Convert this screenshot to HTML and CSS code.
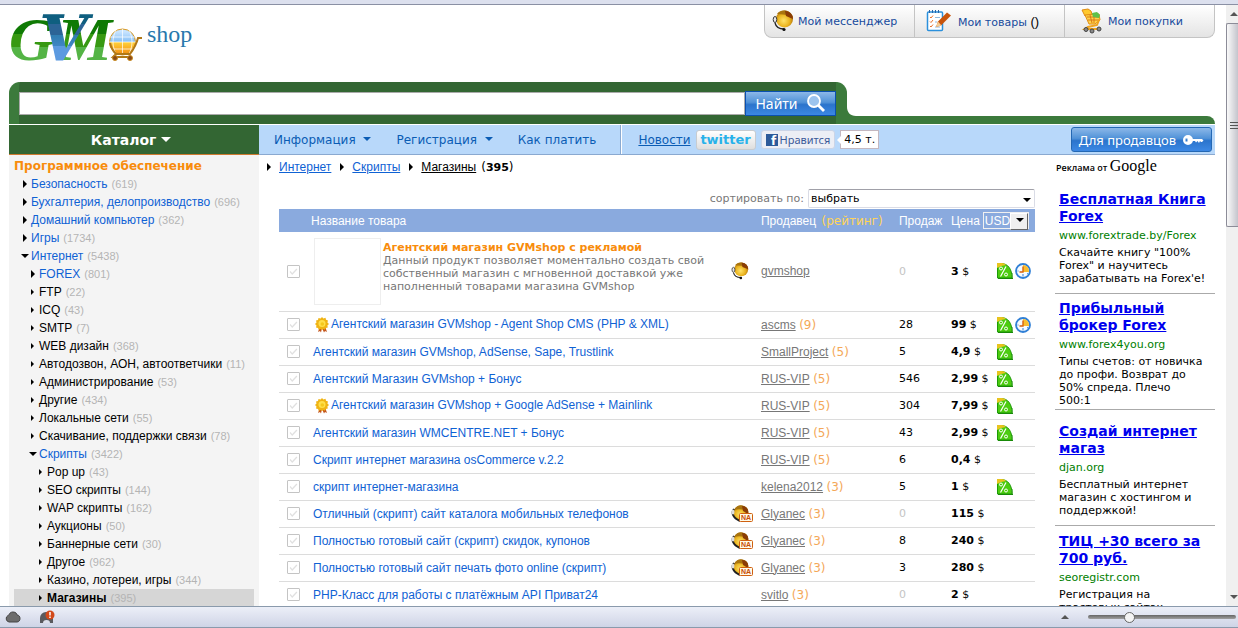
FILE: index.html
```html
<!DOCTYPE html>
<html lang="ru">
<head>
<meta charset="UTF-8">
<meta name="viewport" content="width=device-width, initial-scale=1.0">
<title>GVM shop - Магазины</title>
<link rel="stylesheet" href="styles.css">
</head>
<body>

<!-- Icons -->
<svg class="sprite" aria-hidden="true">
  <defs>
    <linearGradient id="gGreen" x1="0" y1="0" x2="0" y2="1">
      <stop offset="0.22" stop-color="#0f7a04"/><stop offset="0.42" stop-color="#0f7a04"/>
      <stop offset="0.42" stop-color="#379912"/><stop offset="0.62" stop-color="#379912"/>
      <stop offset="0.62" stop-color="#54b445"/>
    </linearGradient>
    <linearGradient id="gBlue" x1="0" y1="0" x2="0" y2="1">
      <stop offset="0.3" stop-color="#0f5f80"/><stop offset="0.3" stop-color="#2c6496"/>
      <stop offset="0.44" stop-color="#2c6496"/><stop offset="0.44" stop-color="#2f7db0"/>
      <stop offset="0.6" stop-color="#3f86c4"/><stop offset="0.6" stop-color="#5c9ae0"/>
    </linearGradient>
    <linearGradient id="gGlobe" x1="0" y1="0" x2="0" y2="1">
      <stop offset="0.1" stop-color="#c8e4ff"/><stop offset="0.5" stop-color="#86bff5"/>
      <stop offset="0.5" stop-color="#ffd23c"/><stop offset="1" stop-color="#f08a10"/>
    </linearGradient>
    <radialGradient id="gGold" cx="0.45" cy="0.6" r="0.6">
      <stop offset="0" stop-color="#ffe36a"/><stop offset="0.6" stop-color="#eab31e"/><stop offset="1" stop-color="#a86a08"/>
    </radialGradient>
  </defs>
  <symbol id="i-head" viewBox="0 0 22 22">
    <circle cx="12.500" cy="9" r="8.500" fill="url(#gGold)"/>
    <path d="M5 4C7 1 12-1 17 2c2 1 3 3 4 5-5-2-11-3-16-3z" fill="#a9740e"/>
    <path d="M13 1c5 0 8 4 8 8l-7-3z" fill="#8a3c06"/>
    <ellipse cx="3" cy="9.500" rx="1.800" ry="3" fill="#e8e8e8" stroke="#333"/>
    <path d="M3 13c1 4 4 6 9 6" fill="none" stroke="#222" stroke-width="1.300"/>
    <circle cx="12" cy="19.500" r="1.600" fill="#111"/>
  </symbol>
  <symbol id="i-na" viewBox="0 0 22 18">
    <circle cx="10" cy="8" r="7.500" fill="url(#gGold)"/>
    <path d="M3 5c2-4 6-6 10-4 3 1 5 4 4 7l-3-3C10 4 6 4 3 5z" fill="#a9740e"/>
    <path d="M11 1c4 0 7 3 6 8l-5-3z" fill="#8a3c06"/>
    <path d="M3 4c-3 4-1 9 6 12" fill="none" stroke="#222" stroke-width="2"/>
    <ellipse cx="2" cy="7" rx="1.500" ry="2.500" fill="#ddd"/>
    <rect x="8.500" y="8.500" width="13" height="8" rx="1" fill="#fffbe8" stroke="#d06010"/>
    <text x="10" y="15" class="na-text">NA</text>
  </symbol>
  <symbol id="i-percent" viewBox="0 0 16 16">
    <path d="M0.500 15V0.500H4C11 0.500 15 6 15 15z" fill="#4ccc10" stroke="#1d9a08"/>
    <path d="M0 5V0h5c2 0 3 1 4 2L4 3z" fill="#e8c41e"/>
    <path d="M1 15.500h15V10" fill="none" stroke="#188a08"/>
    <circle cx="4" cy="5.500" r="1.500" fill="none" stroke="#fff"/>
    <circle cx="9" cy="11.500" r="1.500" fill="none" stroke="#fff"/>
    <path d="M9 3.500L3.500 13.500" stroke="#fff" stroke-width="1.200"/>
  </symbol>
  <symbol id="i-clock" viewBox="0 0 16 16">
    <circle cx="8" cy="8" r="7" fill="#f6fbff" stroke="#2f7fd6" stroke-width="1.800"/>
    <path d="M8 9V2a6 6 0 0 1 6 7z" fill="#f8bd30"/>
    <path d="M8 3.500V9H4.500" fill="none" stroke="#d8620c" stroke-width="1.400"/>
    <path d="M8 11v2.500M2.500 8h1M12 10.500l1 .5" stroke="#2f7fd6"/>
  </symbol>
  <symbol id="i-medal" viewBox="0 0 14 16">
    <path d="M5 9l-2 6 2-1 1 1.500L7 11l2 4.500 1-1.500 2 1-2-6z" fill="#c4561c"/>
    <path d="M7 0l1.400 1.500L10.500.8l.5 2 2 .6-.6 2L14 7l-1.600 1.500.4 2-2 .4-.8 1.900-1.800-.8L7 13l-1.400-1-1.900.8-.7-1.900-2-.5.5-2L0 7l1.500-1.500-.5-2 2-.6.5-2 2.100.6z" fill="#f0b414"/>
    <circle cx="7" cy="6.500" r="3.500" fill="#ffe04a"/>
    <circle cx="7.300" cy="7" r="1.800" fill="#f5c81e"/>
  </symbol>
  <symbol id="i-check" viewBox="0 0 13 13">
    <path d="M2.500 6.500L5 9.500 10.500 3.500" fill="none" stroke="#e0e0e0" stroke-width="1.500"/>
  </symbol>
</svg>

<div class="window-edge"></div>

<div class="viewport">
  <div class="page">

    <header class="header">
      <a class="logo" href="#" aria-label="GVM shop">
        <svg width="190" height="50" viewBox="0 0 190 50">
          <text x="0" y="45" class="logo-big" fill="url(#gGreen)">G</text>
          <text x="48" y="45" class="logo-big" fill="url(#gGreen)">M</text>
          <text x="30" y="46" class="logo-v" fill="url(#gBlue)">V</text>
          <circle cx="113.500" cy="27" r="13" fill="url(#gGlobe)" stroke="#d99a22"/>
          <path d="M101 22h25M100 27h27M102 34h23M113.500 14v26M107 15c-4 8-4 16 0 24M120 15c4 8 4 16 0 24" fill="none" stroke="#fff" stroke-opacity="0.700"/>
          <path d="M133 23h-4c-2 8-5 12-8 16h-14l-3 3h19M101 28c1 5 3 8 6 11" fill="none" stroke="#b07818" stroke-width="2"/>
          <circle cx="106" cy="43" r="2.500" fill="#8a4a18" stroke="#c88a20"/>
          <circle cx="121" cy="43" r="2.500" fill="#8a4a18" stroke="#c88a20"/>
          <text x="138" y="27" class="logo-shop">shop</text>
        </svg>
      </a>
      <nav class="user-tabs">
        <a href="#">
          <svg width="22" height="22"><use href="#i-head"/></svg>
          <span>Мой мессенджер</span>
        </a>
        <a href="#">
          <svg width="26" height="22" viewBox="0 0 26 22">
            <rect x="1.500" y="2" width="15" height="18.500" rx="1" fill="#fff" stroke="#2b90dc" stroke-width="1.500"/>
            <path d="M3.500 0v3M6.500 0v3M9.500 0v3M12.500 0v3" stroke="#2565a8"/>
            <path d="M4 7l1 1 2-2.500M4 11.500l1 1 2-2.500M4 16l1 1 2-2.500" fill="none" stroke="#e8722c"/>
            <path d="M9 7.500h5M9 12h2M9 17h5" stroke="#8fb8dc"/>
            <path d="M10 17l2-5.500L21 2.500l4 3-10 10z" fill="#c8540c"/>
            <path d="M10 17l2-5.500 3.500 4z" fill="#f4cc94"/>
          </svg>
          <span>Мои товары <b class="count">()</b></span>
        </a>
        <a href="#">
          <svg width="22" height="26" viewBox="0 0 22 26">
            <path d="M2 2l6-1 3 2 1 3-7 2z" fill="#ffc92e" stroke="#e08b12"/>
            <path d="M5 7l14-1 1 6-5 4H9z" fill="#ffd548" stroke="#e08b12"/>
            <path d="M7 9h12M8 12h11M10 7l2 8M14 7v8" stroke="#d9781a"/>
            <path d="M12 5l5-1 3 3-1 3-6-1z" fill="#5fc04a"/>
            <path d="M19 12l-2 5-9 2-3 2h15" fill="none" stroke="#f0a41c" stroke-width="2"/>
            <circle cx="6" cy="21.500" r="2" fill="#888" stroke="#444"/>
            <circle cx="12" cy="23" r="2" fill="#888" stroke="#444"/>
            <circle cx="19" cy="21" r="2" fill="#888" stroke="#444"/>
          </svg>
          <span>Мои покупки</span>
        </a>
      </nav>
    </header>

    <form class="search-row">
      <div class="search-box">
        <input type="text" aria-label="Поиск">
        <button type="button" class="find-btn">Найти
          <svg width="20" height="20" viewBox="0 0 20 20">
            <circle cx="8" cy="8" r="6" fill="#9cc4ee" stroke="#fff" stroke-width="1.800"/>
            <path d="M12.500 12.500l5.500 5.500" stroke="#fff" stroke-width="2.800"/>
          </svg>
        </button>
      </div>
      <div class="search-tail">
        <svg width="9" height="9" viewBox="0 0 9 9"><path d="M0 0c0 5 3 9 9 9H0z" fill="#3c7a3c"/></svg>
      </div>
    </form>

    <div class="menu">
      <button type="button" class="catalog-btn">Каталог <i class="caret"></i></button>
      <nav class="menu-links">
        <a href="#">Информация <i class="caret"></i></a>
        <a href="#">Регистрация <i class="caret"></i></a>
        <a href="#">Как платить</a>
      </nav>
      <div class="menu-social">
        <a class="news" href="#">Новости</a>
        <a class="twitter" href="#">twitter</a>
        <button type="button" class="like">
          <svg width="12" height="12" viewBox="0 0 12 12"><rect width="12" height="12" fill="#2d5a9a"/><text x="5" y="11" class="fb-text">f</text></svg>
          Нравится
        </button>
        <span class="bubble">4,5 т.</span>
      </div>
      <button type="button" class="seller-btn">Для продавцов
        <svg width="22" height="12" viewBox="0 0 22 12">
          <path fill-rule="evenodd" d="M6 1a5 5 0 1 1 0 10A5 5 0 1 1 6 1zM3.500 4.500v3h2v-3z" fill="#fff"/>
          <path d="M10 5h10l1.500 1.500L20 8h-1l-1-1-1 2-1.500-2L14 8.500 13 7h-3z" fill="#fff"/>
        </svg>
      </button>
    </div>

    <div class="columns">

      <aside class="sidebar">
        <h2>Программное обеспечение</h2>
        <ul class="tree">
          <li><a href="#">Безопасность</a> <small>(619)</small></li>
          <li><a href="#">Бухгалтерия, делопроизводство</a> <small>(696)</small></li>
          <li><a href="#">Домашний компьютер</a> <small>(362)</small></li>
          <li><a href="#">Игры</a> <small>(1734)</small></li>
          <li class="open"><a href="#">Интернет</a> <small>(5438)</small></li>
          <li class="level2"><a href="#">FOREX</a> <small>(801)</small></li>
          <li class="level2 dark"><a href="#">FTP</a> <small>(22)</small></li>
          <li class="level2 dark"><a href="#">ICQ</a> <small>(43)</small></li>
          <li class="level2 dark"><a href="#">SMTP</a> <small>(7)</small></li>
          <li class="level2 dark"><a href="#">WEB дизайн</a> <small>(368)</small></li>
          <li class="level2 dark"><a href="#">Автодозвон, АОН, автоответчики</a> <small>(11)</small></li>
          <li class="level2 dark"><a href="#">Администрирование</a> <small>(53)</small></li>
          <li class="level2 dark"><a href="#">Другие</a> <small>(434)</small></li>
          <li class="level2 dark"><a href="#">Локальные сети</a> <small>(55)</small></li>
          <li class="level2 dark"><a href="#">Скачивание, поддержки связи</a> <small>(78)</small></li>
          <li class="level2 open"><a href="#">Скрипты</a> <small>(3422)</small></li>
          <li class="level3 dark"><a href="#">Pop up</a> <small>(43)</small></li>
          <li class="level3 dark"><a href="#">SEO скрипты</a> <small>(144)</small></li>
          <li class="level3 dark"><a href="#">WAP скрипты</a> <small>(162)</small></li>
          <li class="level3 dark"><a href="#">Аукционы</a> <small>(50)</small></li>
          <li class="level3 dark"><a href="#">Баннерные сети</a> <small>(30)</small></li>
          <li class="level3 dark"><a href="#">Другое</a> <small>(962)</small></li>
          <li class="level3 dark"><a href="#">Казино, лотереи, игры</a> <small>(344)</small></li>
          <li class="level3 dark current"><a href="#">Магазины</a> <small>(395)</small></li>
        </ul>
      </aside>

      <main class="content">
        <div class="crumbs">
          <a href="#">Интернет</a>
          <a href="#">Скрипты</a>
          <a href="#" class="here">Магазины</a>
          <span class="total">(<b>395</b>)</span>
        </div>

        <div class="sort">
          <label for="sort">сортировать по:</label>
          <span class="select-wrap">
            <select id="sort"><option>выбрать</option></select>
          </span>
        </div>

        <table class="goods">
          <colgroup>
            <col class="c-check"><col><col class="c-msg"><col class="c-seller"><col class="c-sales"><col class="c-price"><col class="c-icons">
          </colgroup>
          <thead>
            <tr>
              <th></th>
              <th>Название товара</th>
              <th></th>
              <th>Продавец <span class="rating-head">(рейтинг)</span></th>
              <th>Продаж</th>
              <th colspan="2">
                <div class="price-head">
                  <label for="currency">Цена</label>
                  <span class="currency"><select id="currency"><option>USD</option></select></span>
                </div>
              </th>
            </tr>
          </thead>
          <tbody>
            <tr class="featured">
              <td><button type="button" class="tick" aria-label="Выбрать"><svg width="11" height="11"><use href="#i-check"/></svg></button></td>
              <td>
                <div class="promo">
                  <div class="thumb"></div>
                  <div class="promo-text">
                    <a href="#">Агентский магазин GVMshop с рекламой</a>
                    <p>Данный продукт позволяет моментально создать свой собственный магазин с мгновенной доставкой уже наполненный товарами магазина GVMshop</p>
                  </div>
                </div>
              </td>
              <td><svg width="18" height="18"><use href="#i-head"/></svg></td>
              <td class="seller"><a href="#">gvmshop</a></td>
              <td class="zero">0</td>
              <td><b>3</b> $</td>
              <td class="marks"><svg width="16" height="16"><use href="#i-percent"/></svg><svg width="16" height="16"><use href="#i-clock"/></svg></td>
            </tr>
            <tr>
              <td><button type="button" class="tick" aria-label="Выбрать"><svg width="11" height="11"><use href="#i-check"/></svg></button></td>
              <td class="name"><svg class="medal" width="14" height="16"><use href="#i-medal"/></svg><a href="#">Агентский магазин GVMshop - Agent Shop CMS (PHP &amp; XML)</a></td>
              <td></td>
              <td class="seller"><a href="#">ascms</a> <i>(9)</i></td>
              <td>28</td>
              <td><b>99</b> $</td>
              <td class="marks"><svg width="16" height="16"><use href="#i-percent"/></svg><svg width="16" height="16"><use href="#i-clock"/></svg></td>
            </tr>
            <tr>
              <td><button type="button" class="tick" aria-label="Выбрать"><svg width="11" height="11"><use href="#i-check"/></svg></button></td>
              <td class="name"><a href="#">Агентский магазин GVMshop, AdSense, Sape, Trustlink</a></td>
              <td></td>
              <td class="seller"><a href="#">SmallProject</a> <i>(5)</i></td>
              <td>5</td>
              <td><b>4,9</b> $</td>
              <td class="marks"><svg width="16" height="16"><use href="#i-percent"/></svg></td>
            </tr>
            <tr>
              <td><button type="button" class="tick" aria-label="Выбрать"><svg width="11" height="11"><use href="#i-check"/></svg></button></td>
              <td class="name"><a href="#">Агентский Магазин GVMshop + Бонус</a></td>
              <td></td>
              <td class="seller"><a href="#">RUS-VIP</a> <i>(5)</i></td>
              <td>546</td>
              <td><b>2,99</b> $</td>
              <td class="marks"><svg width="16" height="16"><use href="#i-percent"/></svg></td>
            </tr>
            <tr>
              <td><button type="button" class="tick" aria-label="Выбрать"><svg width="11" height="11"><use href="#i-check"/></svg></button></td>
              <td class="name"><svg class="medal" width="14" height="16"><use href="#i-medal"/></svg><a href="#">Агентский магазин GVMshop + Google AdSense + Mainlink</a></td>
              <td></td>
              <td class="seller"><a href="#">RUS-VIP</a> <i>(5)</i></td>
              <td>304</td>
              <td><b>7,99</b> $</td>
              <td class="marks"><svg width="16" height="16"><use href="#i-percent"/></svg></td>
            </tr>
            <tr>
              <td><button type="button" class="tick" aria-label="Выбрать"><svg width="11" height="11"><use href="#i-check"/></svg></button></td>
              <td class="name"><a href="#">Агентский магазин WMCENTRE.NET + Бонус</a></td>
              <td></td>
              <td class="seller"><a href="#">RUS-VIP</a> <i>(5)</i></td>
              <td>43</td>
              <td><b>2,99</b> $</td>
              <td class="marks"><svg width="16" height="16"><use href="#i-percent"/></svg></td>
            </tr>
            <tr>
              <td><button type="button" class="tick" aria-label="Выбрать"><svg width="11" height="11"><use href="#i-check"/></svg></button></td>
              <td class="name"><a href="#">Скрипт интернет магазина osCommerce v.2.2</a></td>
              <td></td>
              <td class="seller"><a href="#">RUS-VIP</a> <i>(5)</i></td>
              <td>6</td>
              <td><b>0,4</b> $</td>
              <td></td>
            </tr>
            <tr>
              <td><button type="button" class="tick" aria-label="Выбрать"><svg width="11" height="11"><use href="#i-check"/></svg></button></td>
              <td class="name"><a href="#">скрипт интернет-магазина</a></td>
              <td></td>
              <td class="seller"><a href="#">kelena2012</a> <i>(3)</i></td>
              <td>5</td>
              <td><b>1</b> $</td>
              <td class="marks"><svg width="16" height="16"><use href="#i-percent"/></svg></td>
            </tr>
            <tr>
              <td><button type="button" class="tick" aria-label="Выбрать"><svg width="11" height="11"><use href="#i-check"/></svg></button></td>
              <td class="name"><a href="#">Отличный (скрипт) сайт каталога мобильных телефонов</a></td>
              <td><svg width="22" height="18"><use href="#i-na"/></svg></td>
              <td class="seller"><a href="#">Glyanec</a> <i>(3)</i></td>
              <td class="zero">0</td>
              <td><b>115</b> $</td>
              <td></td>
            </tr>
            <tr>
              <td><button type="button" class="tick" aria-label="Выбрать"><svg width="11" height="11"><use href="#i-check"/></svg></button></td>
              <td class="name"><a href="#">Полностью готовый сайт (скрипт) скидок, купонов</a></td>
              <td><svg width="22" height="18"><use href="#i-na"/></svg></td>
              <td class="seller"><a href="#">Glyanec</a> <i>(3)</i></td>
              <td>8</td>
              <td><b>240</b> $</td>
              <td></td>
            </tr>
            <tr>
              <td><button type="button" class="tick" aria-label="Выбрать"><svg width="11" height="11"><use href="#i-check"/></svg></button></td>
              <td class="name"><a href="#">Полностью готовый сайт печать фото online (скрипт)</a></td>
              <td><svg width="22" height="18"><use href="#i-na"/></svg></td>
              <td class="seller"><a href="#">Glyanec</a> <i>(3)</i></td>
              <td>3</td>
              <td><b>280</b> $</td>
              <td></td>
            </tr>
            <tr>
              <td><button type="button" class="tick" aria-label="Выбрать"><svg width="11" height="11"><use href="#i-check"/></svg></button></td>
              <td class="name"><a href="#">PHP-Класс для работы с платёжным API Приват24</a></td>
              <td></td>
              <td class="seller"><a href="#">svitlo</a> <i>(3)</i></td>
              <td class="zero">0</td>
              <td><b>2</b> $</td>
              <td></td>
            </tr>
          </tbody>
        </table>
      </main>

      <aside class="ads">
        <div class="ads-by">Реклама от <span>Google</span></div>
        <div class="ad">
          <a href="#">Бесплатная Книга Forex</a>
          <cite>www.forextrade.by/Forex</cite>
          <p>Скачайте книгу "100% Forex" и научитесь зарабатывать на Forex'е!</p>
        </div>
        <div class="ad">
          <a href="#">Прибыльный брокер Forex</a>
          <cite>www.forex4you.org</cite>
          <p>Типы счетов: от новичка до профи. Возврат до 50% спреда. Плечо<br>500:1</p>
        </div>
        <div class="ad">
          <a href="#">Создай интернет магаз</a>
          <cite>djan.org</cite>
          <p>Бесплатный интернет магазин с хостингом и поддержкой!</p>
        </div>
        <div class="ad">
          <a href="#">ТИЦ +30 всего за 700 руб.</a>
          <cite>seoregistr.com</cite>
          <p>Регистрация на трастовых сайтах</p>
        </div>
      </aside>

    </div>
  </div>

  <!-- Window scrollbar -->
  <div class="scrollbar">
    <div class="arrow up"></div>
    <div class="scroll-thumb"><i></i><i></i><i></i></div>
    <div class="arrow down"></div>
  </div>
</div>

<footer class="statusbar">
  <svg width="16" height="12" viewBox="0 0 16 12"><path d="M4 11a3.500 3.500 0 0 1-1-6.500C4 5 4 1 8 1c3 0 4 2 4 3 4 0 4 7 0 7z" fill="#6c6c6c" stroke="#444"/></svg>
  <svg width="16" height="14" viewBox="0 0 16 14">
    <path d="M1 13V8a6 6 0 0 1 6-6 6 6 0 0 1 7 6v5z" fill="#5a5a5e"/>
    <path d="M4 13a3.500 3 0 0 1 7 0z" fill="#dde0ec"/>
    <circle cx="11" cy="5" r="4.500" fill="#d2491a"/>
    <path d="M11 2v3.500M11 6.500v1.500" stroke="#fff" stroke-width="1.500"/>
  </svg>
  <div class="zoom">
    <i class="zoom-up"></i>
    <input type="range" min="0" max="100" value="26" aria-label="Масштаб">
  </div>
</footer>

</body>
</html>
```
FILE: styles.css
```css
* {
  box-sizing: border-box;
}

body {
  display: flex;
  flex-direction: column;
  height: 100vh;
  margin: 0;
  overflow: hidden;
  background-color: #fff;
  font-family: "DejaVu Sans", Verdana, sans-serif;
  font-size: 11px;
  color: #000;
}

h2, p, ul {
  margin: 0;
  padding: 0;
}

button, input, select {
  font-family: inherit;
}

svg {
  flex: none;
}

.sprite {
  position: absolute;
  width: 0;
  height: 0;
}

.na-text {
  font: bold 7px "Liberation Sans", sans-serif;
  fill: #c84c08;
}

.window-edge {
  flex: none;
  height: 5px;
  background-color: #dce0ee;
  border-bottom: 1px solid #8a90a4;
}

.viewport {
  flex: 1;
  display: flex;
  min-height: 0;
}

.page {
  flex: 1;
  min-width: 0;
  padding: 0 11px 0 9px;
  overflow: hidden;
}

/* Header */
.header {
  display: flex;
  justify-content: space-between;
  align-items: flex-start;
  height: 77px;
}

.logo {
  padding-top: 10px;
}

.logo svg {
  overflow: visible;
}

.logo-big {
  font: italic bold 62px "Liberation Serif", serif;
}

.logo-v {
  font: italic bold 63px "DejaVu Serif", serif;
}

.logo-shop {
  font: 24px "Liberation Serif", serif;
  fill: #2878ac;
}

.user-tabs {
  display: flex;
  border: 1px solid #c4c4c4;
  border-top: none;
  border-radius: 0 0 8px 8px;
  background: linear-gradient(#fff, #e4e4e4);
}

.user-tabs a {
  display: flex;
  align-items: center;
  gap: 4px;
  width: 149px;
  height: 32px;
  padding-left: 7px;
  color: #164a9c;
  text-decoration: none;
  white-space: nowrap;
}

.user-tabs a + a {
  gap: 6px;
  width: 150px;
  padding-left: 11px;
  border-left: 1px solid #c4c4c4;
}

.user-tabs a + a + a {
  padding-left: 15px;
}

.count {
  font: 13px "Liberation Sans", sans-serif;
  color: #000;
}

/* Search */
.search-row {
  display: flex;
  align-items: flex-end;
}

.search-box {
  flex: 1;
  display: flex;
  align-items: center;
  height: 42px;
  border: solid #3c7a3c;
  border-width: 0 11px 0 10px;
  border-radius: 11px 11px 0 0;
  background-color: #336633;
}

.search-box input {
  flex: 1;
  min-width: 0;
  height: 23px;
  border: 1px solid #aaa;
  background-color: #fff;
}

.find-btn {
  display: flex;
  align-items: center;
  justify-content: center;
  gap: 8px;
  width: 91px;
  height: 25px;
  padding: 0;
  border: 1px solid #0a50b0;
  background: linear-gradient(#8cb8e8, #5092d8 45%, #2b74cc 55%, #3c88e4);
  color: #fff;
  font-family: "Noto Sans", sans-serif;
  font-size: 14px;
}

.search-tail {
  position: relative;
  width: 368px;
  height: 8px;
  border-radius: 0 8px 0 0;
  background-color: #3c7a3c;
}

.search-tail svg {
  position: absolute;
  left: 0;
  bottom: 8px;
}

/* Menu */
.menu {
  display: flex;
  align-items: center;
  height: 30px;
  margin-top: 1px;
  border-bottom: 1px solid #8aa9d0;
  background-color: #b8d8fa;
  font-size: 12px;
}

.menu a {
  color: #0a5cb4;
  text-decoration: none;
}

.caret {
  display: inline-block;
  margin-left: 4px;
  border: solid transparent;
  border-width: 4px 4px 0;
  border-top-color: currentColor;
  vertical-align: 3px;
}

.catalog-btn {
  width: 250px;
  height: 30px;
  margin-bottom: -1px;
  padding: 0 12px 0 6px;
  border: none;
  border-bottom: 1px solid #d07a30;
  background-color: #336633;
  color: #fff;
  font-size: 14px;
  font-weight: bold;
}

.catalog-btn .caret {
  margin-left: 0;
  border-width: 5px 5px 0;
}

.menu-links {
  display: flex;
  align-items: center;
  gap: 25px;
  height: 29px;
  padding: 0 24px 0 15px;
  border-right: 1px solid #8aa9d0;
}

.menu-links a {
  white-space: nowrap;
}

.menu-social {
  display: flex;
  align-items: center;
  gap: 5px;
  flex: 1;
  height: 29px;
  padding-left: 16px;
  border-left: 1px solid #fff;
}

.menu-social .news {
  text-decoration: underline;
}

.menu-social .twitter {
  width: 60px;
  height: 20px;
  border: 1px solid #c8ccd0;
  border-radius: 3px;
  background: linear-gradient(#fff, #dedede);
  color: #28b2ea;
  font-size: 13px;
  font-weight: bold;
  line-height: 17px;
  text-align: center;
}

.like {
  display: flex;
  align-items: center;
  gap: 2px;
  height: 19px;
  padding: 0 4px;
  border: 1px solid #cad4e7;
  border-radius: 3px;
  background-color: #eceef5;
  color: #3b5998;
  font-family: "Noto Sans", sans-serif;
  font-size: 11px;
}

.like svg {
  overflow: visible;
}

.fb-text {
  font: bold 12px "DejaVu Sans", sans-serif;
  fill: #fff;
}

.bubble {
  position: relative;
  height: 19px;
  padding: 0 3px;
  border: 1px solid #c4b8c0;
  background-color: #fff;
  font-size: 11px;
  line-height: 17px;
}

.bubble::before {
  content: "";
  position: absolute;
  left: -4px;
  top: 5px;
  border: solid transparent;
  border-width: 4px 4px 4px 0;
  border-right-color: #fff;
}

.seller-btn {
  display: flex;
  align-items: center;
  gap: 6px;
  height: 25px;
  margin-right: 3px;
  padding: 0 7px;
  border: 1px solid #2468b4;
  border-radius: 3px;
  background: linear-gradient(#8cb8e8, #5092d8 45%, #2b74cc 55%, #3c88e4);
  color: #fff;
  font-family: "Noto Sans", sans-serif;
  font-size: 13px;
}

/* Columns */
.columns {
  display: flex;
}

.sidebar {
  width: 250px;
  padding: 3px 5px;
  background-color: #f4f4f4;
  font-family: "Liberation Sans", Arial, sans-serif;
}

.sidebar h2 {
  color: #f88c0c;
  font: bold 12px/17px "DejaVu Sans", Verdana, sans-serif;
}

.tree {
  list-style: none;
  font-size: 12px;
  line-height: 18px;
}

.tree li {
  display: flex;
  align-items: center;
  gap: 4px;
  height: 18px;
  padding-left: 9px;
  white-space: nowrap;
}

.tree li::before,
.crumbs a::before {
  content: "";
  flex: none;
  border: solid transparent;
  border-width: 4px 0 4px 4px;
  border-left-color: #000;
}

.tree .level2 {
  padding-left: 17px;
}

.tree .level3 {
  padding-left: 25px;
}

.tree .dark::before {
  border-width: 3px 1px 3px 3px;
}

.tree .open::before {
  margin-left: -2px;
  margin-right: -2px;
  border-width: 4px 4px 0;
  border-color: #000 transparent transparent;
}

.tree a {
  color: #0f62d4;
  text-decoration: none;
}

.tree .dark a {
  color: #000;
}

.tree small {
  color: #b4b4b4;
  font-size: 11px;
}

.tree .current {
  background-color: #d6d6d6;
}

.tree .current a {
  font-weight: bold;
}

.content {
  flex: 1;
  min-width: 0;
  padding: 0 20px;
}

.crumbs {
  display: flex;
  align-items: center;
  gap: 9px;
  height: 24px;
  margin-left: -12px;
  font-family: "Liberation Sans", Arial, sans-serif;
  font-size: 12px;
}

.crumbs a {
  display: flex;
  align-items: center;
  gap: 8px;
  color: #0f62d4;
  text-decoration: underline;
}

.crumbs .here {
  color: #000;
}

.total {
  margin-left: -4px;
  font: 12px "DejaVu Sans", Verdana, sans-serif;
}

.total b {
  font-size: 11px;
}

.sort {
  display: flex;
  align-items: center;
  justify-content: flex-end;
  gap: 4px;
  height: 20px;
  margin-top: 9px;
  margin-bottom: 1px;
  color: #777;
}

.select-wrap,
.currency {
  position: relative;
  display: flex;
}

.select-wrap::after {
  content: "";
  position: absolute;
  right: 4px;
  top: 9px;
  border: solid transparent;
  border-width: 4px 4px 0;
  border-top-color: #000;
}

.select-wrap select {
  appearance: none;
  width: 227px;
  height: 19px;
  padding: 0 2px;
  border: 1px solid #dadce6;
  border-top-color: #a0a0a8;
  border-radius: 2px;
  background-color: #fff;
  color: #000;
  font-size: 11px;
}

/* Goods table */
.goods {
  width: 100%;
  border-collapse: collapse;
  table-layout: fixed;
}

.c-check { width: 32px; }
.c-msg { width: 30px; }
.c-seller { width: 138px; }
.c-sales { width: 52px; }
.c-price { width: 44px; }
.c-icons { width: 40px; }

.goods th {
  height: 23px;
  padding: 0;
  background-color: #8aaade;
  color: #fff;
  font: 12px "Liberation Sans", Arial, sans-serif;
  text-align: left;
  white-space: nowrap;
}

.rating-head {
  margin-left: 2px;
  color: #ffd458;
  font: 12px "DejaVu Sans", Verdana, sans-serif;
}

.price-head {
  display: flex;
  align-items: center;
  gap: 3px;
}

.currency select {
  appearance: none;
  width: 46px;
  height: 17px;
  padding: 0 1px;
  border: 1px solid #f0f0f0;
  border-radius: 0;
  background-color: #8aaade;
  color: #fff;
  font: 12px "Liberation Sans", Arial, sans-serif;
}

.currency::before {
  content: "";
  position: absolute;
  right: 1px;
  top: 1px;
  width: 16px;
  height: 15px;
  border: 1px solid #fff;
  border-color: #fff #666 #666 #fff;
  background-color: #f0f0f0;
}

.currency::after {
  content: "";
  position: absolute;
  right: 5px;
  top: 6px;
  border: solid transparent;
  border-width: 4px 4px 0;
  border-top-color: #000;
}

.goods td {
  height: 27px;
  padding: 0;
  border-bottom: 1px solid #dcdcdc;
  vertical-align: middle;
  white-space: nowrap;
}

.goods td svg {
  vertical-align: middle;
}

.goods td:first-child {
  padding-left: 8px;
}

.goods .featured td {
  height: 79px;
}

.goods .zero {
  color: #c4c4c4;
}

.goods .marks {
  padding-left: 2px;
}

.marks svg + svg {
  margin-left: 2px;
}

.tick {
  display: flex;
  width: 13px;
  height: 13px;
  padding: 0;
  border: 1px solid #c4c4c4;
  border-radius: 1px;
  background-color: #fff;
}

.goods .name {
  padding-left: 2px;
}

.goods .name a {
  color: #0f62d4;
  font: 12px "Liberation Sans", Arial, sans-serif;
  text-decoration: none;
}

.medal {
  margin: 0 2px;
}

.seller a {
  color: #777;
  font: 12px "Liberation Sans", Arial, sans-serif;
}

.seller i {
  color: #f4a858;
  font-size: 12px;
  font-style: normal;
}

.promo {
  display: flex;
  align-items: center;
  gap: 2px;
  padding-left: 3px;
}

.thumb {
  flex: none;
  width: 67px;
  height: 67px;
  border: 1px solid #eee;
}

.promo-text {
  max-width: 335px;
  margin-bottom: 8px;
  color: #777;
  line-height: 13px;
  white-space: normal;
}

.promo-text a {
  color: #f88c0c;
  font-weight: bold;
  text-decoration: none;
}

/* Ads */
.ads {
  flex: none;
  width: 160px;
}

.ads-by {
  height: 23px;
  padding-left: 1px;
  font: 600 9px/25px "Open Sans", sans-serif;
  white-space: nowrap;
}

.ads-by span {
  font: 16px/20px "Liberation Serif", serif;
}

.ad {
  display: flex;
  flex-direction: column;
  justify-content: center;
  min-height: 116px;
  padding: 4px 6px 0 4px;
  border-bottom: 1px solid #aaa;
}

.ad:last-child {
  justify-content: flex-start;
  padding-top: 7px;
}

.ad a {
  color: #0000ee;
  font-size: 14px;
  font-weight: bold;
  line-height: 17px;
}

.ad cite {
  margin: 4px 0;
  color: #008000;
  font-style: normal;
  line-height: 13px;
}

.ad p {
  line-height: 13px;
}

/* Scrollbar */
.scrollbar {
  display: flex;
  flex-direction: column;
  width: 12px;
  background-color: #f0f0f0;
}

.arrow {
  height: 18px;
  padding: 7px 0 0 4px;
}

.arrow::before {
  content: "";
  display: block;
  width: 0;
  border: solid transparent;
  border-width: 0 4px 4px;
  border-bottom-color: #555;
}

.arrow.down {
  margin-top: auto;
}

.arrow.down::before {
  border-width: 4px 4px 0;
  border-color: #555 transparent transparent;
}

.scroll-thumb {
  display: flex;
  flex-direction: column;
  align-items: flex-end;
  justify-content: center;
  gap: 2px;
  height: 34%;
  border: 1px solid #8c8c98;
  border-right: none;
  border-radius: 2px 0 0 2px;
  background: linear-gradient(to right, #fafafa, #c4c4cc);
}

.scroll-thumb i {
  width: 8px;
  height: 1px;
  background-color: #555;
}

/* Status bar */
.statusbar {
  flex: none;
  display: flex;
  align-items: center;
  gap: 18px;
  height: 22px;
  padding-left: 5px;
  border: solid #8a9aac;
  border-width: 1px 0;
  background: linear-gradient(#eceff8, #cfd4e6);
}

.zoom {
  display: flex;
  align-items: center;
  gap: 19px;
  margin-left: auto;
}

.zoom-up {
  border: solid transparent;
  border-width: 0 4px 4px;
  border-bottom-color: #555;
}

.zoom input {
  appearance: none;
  width: 148px;
  height: 4px;
  margin: 0 2px 0 0;
  border-radius: 2px;
  background: linear-gradient(#666, #a0a0a0);
}

.zoom input::-webkit-slider-thumb {
  appearance: none;
  width: 11px;
  height: 11px;
  border: 1px solid #666;
  border-radius: 50%;
  background-color: #f4f4f4;
}
```
